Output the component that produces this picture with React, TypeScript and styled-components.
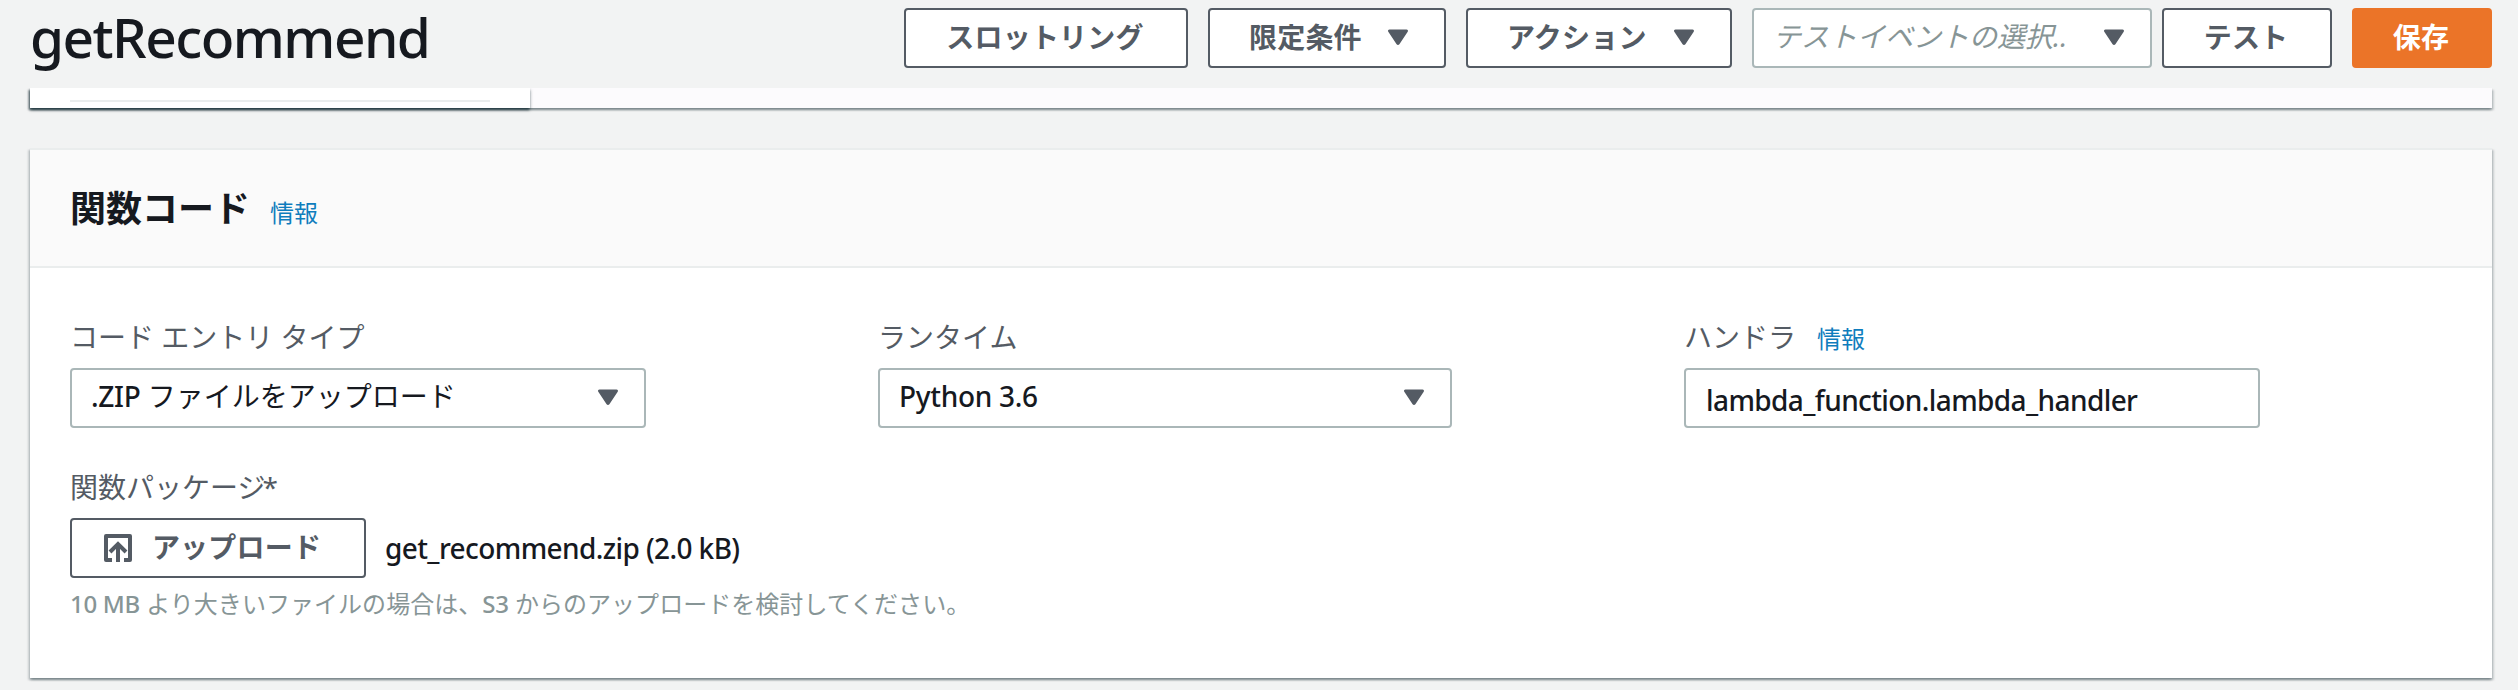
import React from "react";
import styled, { createGlobalStyle, css } from "styled-components";

const GlobalStyle = createGlobalStyle`
  * { box-sizing: border-box; }
  body {
    margin: 0;
    background: #f2f3f3;
    color: #16191f;
    font-family: "Noto Sans", "Noto Sans CJK JP", sans-serif;
    font-size: 28px;
    overflow: hidden;
  }
`;

const Page = styled.div`
  height: 690px;
  overflow: hidden;
`;

const Toolbar = styled.header`
  position: relative;
  z-index: 1;
  height: 88px;
  padding: 8px 26px 0 30px;
  display: flex;
  align-items: flex-start;
  background: #f2f3f3;
`;

const FunctionName = styled.h1`
  margin: -9px auto 0 0;
  font-size: 55px;
  line-height: 76px;
  font-weight: 500;
  letter-spacing: -1.55px;
`;

const Actions = styled.div`
  display: flex;
  gap: 20px;
`;

const TestGroup = styled.div`
  display: flex;
  gap: 10px;
`;

const Button = styled.button<{ $width: number; $primary?: boolean; $split?: boolean }>`
  width: ${(p) => p.$width}px;
  height: 60px;
  padding: 0 35px 3px 39px;
  display: flex;
  align-items: center;
  justify-content: ${(p) => (p.$split ? "space-between" : "center")};
  border: 2px solid ${(p) => (p.$primary ? "#eb7428" : "#545b64")};
  border-radius: 4px;
  background: ${(p) => (p.$primary ? "#eb7428" : "#fff")};
  color: ${(p) => (p.$primary ? "#fff" : "#545b64")};
  font-family: inherit;
  font-size: 28px;
  line-height: 40px;
  font-weight: 700;
  letter-spacing: 0.2px;
  white-space: nowrap;
  ${(p) => !p.$split && css`padding: 0 2px 3px 0;`}
`;

const SelectBox = styled.div<{ $width: number }>`
  width: ${(p) => p.$width}px;
  height: 60px;
  padding: 0 25px 3px 19px;
  display: flex;
  align-items: center;
  justify-content: space-between;
  border: 2px solid #aab7b8;
  border-radius: 4px;
  background: #fff;
  line-height: 41px;
  white-space: nowrap;
`;

const Placeholder = styled.span`
  color: #879596;
  font-style: italic;
`;

const ArrowSvg = styled.svg`
  display: block;
  flex: none;
  fill: #545b64;
`;

const Arrow = () => (
  <ArrowSvg width="22" height="18" viewBox="0 0 22 18">
    <path d="M2.500 1.500h17c1.300 0 1.900 1.200 1.200 2.200l-8.300 12.600c-.7 1-2.100 1-2.800 0L1.300 3.700C.6 2.700 1.200 1.500 2.500 1.500z" />
  </ArrowSvg>
);

const panelShadow = css`
  box-shadow: 0 2px 2px 0 rgba(0, 28, 36, 0.3), 2px 2px 2px 0 rgba(0, 28, 36, 0.15),
    -2px 2px 2px 0 rgba(0, 28, 36, 0.15);
`;

const DesignerStrip = styled.section`
  height: 20px;
  margin: 0 26px 0 30px;
  background: #fcfbfd;
  ${panelShadow}
`;

const DesignerList = styled.div`
  width: 500px;
  height: 20px;
  padding: 12px 40px 0;
  background: #fff;
  box-shadow: 0 2px 3px 0 rgba(0, 28, 36, 0.5), -1px 2px 2px 0 rgba(0, 28, 36, 0.4);
`;

const Divider = styled.div`
  height: 2px;
  background: #eaeded;
`;

const Card = styled.section`
  height: 530px;
  margin: 40px 26px 0 30px;
  border-top: 2px solid #eaeded;
  background: #fff;
  ${panelShadow}
`;

const CardHeader = styled.div`
  height: 118px;
  padding: 33px 40px 0;
  display: flex;
  align-items: baseline;
  gap: 20px;
  background: #fafafa;
  border-bottom: 2px solid #eaeded;
`;

const CardTitle = styled.h2`
  margin: 0;
  font-size: 36px;
  line-height: 52px;
  font-weight: 700;
`;

const InfoLink = styled.a`
  color: #0f7dbd;
  font-size: 24px;
  line-height: 32px;
`;

const Fields = styled.div`
  padding: 48px 40px 0;
  display: flex;
  gap: 232px;
`;

const Field = styled.div`
  display: flex;
  flex-direction: column;
`;

const Label = styled.div`
  height: 52px;
  padding-top: 1px;
  display: flex;
  align-items: baseline;
  gap: 21px;
  line-height: 40px;
  color: #545b64;
`;

const RequiredMark = styled.span`
  margin-left: -24px;
`;

const Value = styled.span`
  color: #16191f;
`;

const Latin = styled.span`
  font-weight: 500;
  letter-spacing: -0.3px;
`;

const TextInput = styled.div`
  width: 576px;
  height: 60px;
  padding: 8px 20px 0;
  border: 2px solid #aab7b8;
  border-radius: 4px;
  line-height: 44px;
  font-weight: 500;
  letter-spacing: -0.6px;
`;

const PackageField = styled.div`
  padding: 38px 40px 0;
`;

const UploadRow = styled.div`
  display: flex;
  align-items: center;
  gap: 19px;
`;

const UploadContent = styled.span`
  margin-right: 9px;
  display: flex;
  align-items: center;
  gap: 20px;
`;

const UploadSvg = styled.svg`
  margin-top: 3px;
`;

const UploadIcon = () => (
  <UploadSvg width="28" height="28" viewBox="0 0 28 28" fill="none" stroke="#545b64" strokeWidth="4">
    <path d="M8 26H2V2h24v24h-6" strokeLinejoin="round" />
    <path d="M14 28V11M6 18l8-8 8 8" />
  </UploadSvg>
);

const FileName = styled.span`
  font-weight: 500;
  letter-spacing: -0.6px;
`;

const Hint = styled.p`
  margin: 8px 0 0;
  color: #879596;
  font-size: 24px;
  line-height: 36px;
  letter-spacing: 0.04px;
`;

export default function App() {
  return (
    <Page>
      <GlobalStyle />
      <Toolbar>
        <FunctionName>getRecommend</FunctionName>
        <Actions>
          <Button $width={284}>スロットリング</Button>
          <Button $width={238} $split>限定条件<Arrow /></Button>
          <Button $width={266} $split>アクション<Arrow /></Button>
          <TestGroup>
            <SelectBox $width={400}>
              <Placeholder>テストイベントの選択..</Placeholder>
              <Arrow />
            </SelectBox>
            <Button $width={170}>テスト</Button>
          </TestGroup>
          <Button $width={140} $primary>保存</Button>
        </Actions>
      </Toolbar>
      <DesignerStrip>
        <DesignerList>
          <Divider />
        </DesignerList>
      </DesignerStrip>
      <Card>
        <CardHeader>
          <CardTitle>関数コード</CardTitle>
          <InfoLink>情報</InfoLink>
        </CardHeader>
        <Fields>
          <Field>
            <Label>コード エントリ タイプ</Label>
            <SelectBox $width={576}>
              <Value><Latin>.ZIP</Latin> ファイルをアップロード</Value>
              <Arrow />
            </SelectBox>
          </Field>
          <Field>
            <Label>ランタイム</Label>
            <SelectBox $width={574}>
              <Value><Latin>Python 3.6</Latin></Value>
              <Arrow />
            </SelectBox>
          </Field>
          <Field>
            <Label>
              ハンドラ<InfoLink>情報</InfoLink>
            </Label>
            <TextInput>lambda_function.lambda_handler</TextInput>
          </Field>
        </Fields>
        <PackageField>
          <Label>関数パッケージ<RequiredMark>*</RequiredMark></Label>
          <UploadRow>
            <Button $width={296}>
              <UploadContent>
                <UploadIcon />
                アップロード
              </UploadContent>
            </Button>
            <FileName>get_recommend.zip (2.0 kB)</FileName>
          </UploadRow>
          <Hint><Latin>10 MB</Latin> より大きいファイルの場合は、<Latin>S3</Latin> からのアップロードを検討してください。</Hint>
        </PackageField>
      </Card>
    </Page>
  );
}
